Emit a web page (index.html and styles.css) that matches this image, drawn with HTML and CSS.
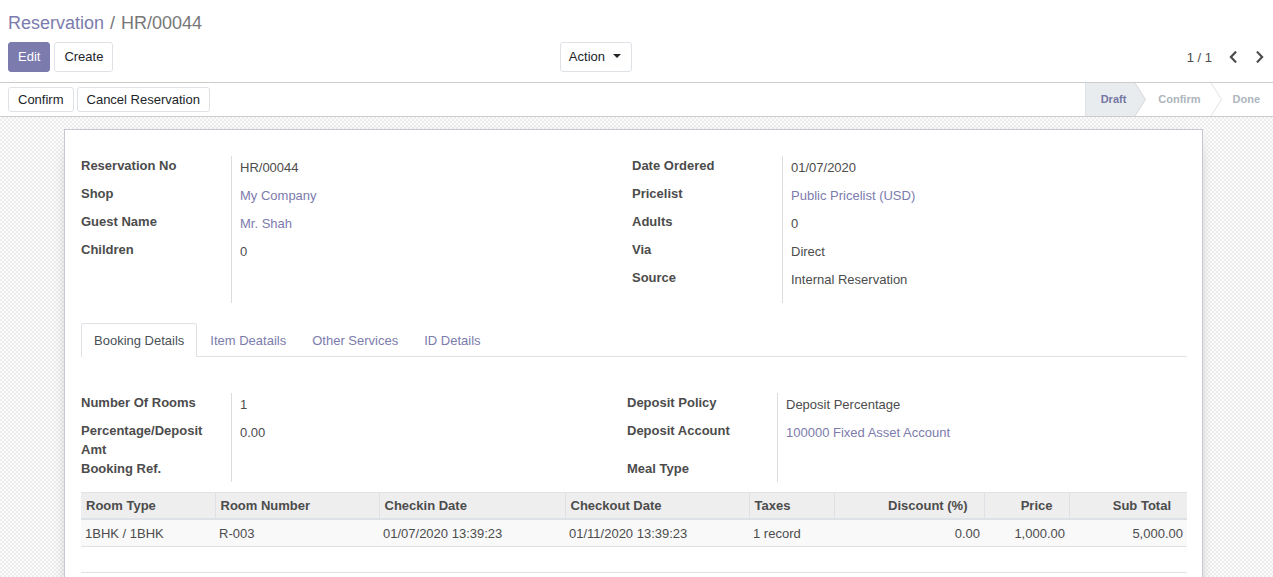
FILE: index.html
```html
<!DOCTYPE html>
<html>
<head>
<meta charset="utf-8">
<title>Reservation / HR/00044</title>
<link rel="stylesheet" href="styles.css">
</head>
<body>
<div class="cp">
  <div class="breadcrumb"><a class="bc-link">Reservation</a><span class="bc-sep">/</span><span class="bc-active">HR/00044</span></div>
  <div class="cp-bottom">
    <div class="cp-left">
      <div class="cp-buttons">
        <button class="btn btn-primary">Edit</button>
        <button class="btn">Create</button>
      </div>
      <div class="cp-sidebar">
        <button class="btn btn-action">Action<span class="caret"></span></button>
      </div>
    </div>
    <div class="cp-right">
      <div class="pager">
        <span class="pager-value">1 / 1</span>
        <button class="pager-btn"><svg width="8" height="12" viewBox="0 0 8 12"><polyline points="6.3,1.4 1.9,6 6.3,10.6" fill="none" stroke="currentColor" stroke-width="2.2" stroke-linecap="square"/></svg></button>
        <button class="pager-btn"><svg width="8" height="12" viewBox="0 0 8 12"><polyline points="1.7,1.4 6.1,6 1.7,10.6" fill="none" stroke="currentColor" stroke-width="2.2" stroke-linecap="square"/></svg></button>
      </div>
    </div>
  </div>
</div>
<div class="statusbar">
  <div class="sb-buttons">
    <button class="btn btn-sm">Confirm</button>
    <button class="btn btn-sm">Cancel Reservation</button>
  </div>
  <div class="sb-status">
    <span class="st st-current">Draft</span><svg class="st-sep" width="11" height="33" viewBox="0 0 11 33" preserveAspectRatio="none"><path d="M0 0 L10.5 16.5 L0 33 Z" fill="#e9ecef"/><polyline points="0,0 10.5,16.5 0,33" fill="none" stroke="#d6d8dc" stroke-width="1"/></svg><span class="st st-mid">Confirm</span><svg class="st-sep" width="11" height="33" viewBox="0 0 11 33" preserveAspectRatio="none"><polyline points="0,0 10.5,16.5 0,33" fill="none" stroke="#dee2e6" stroke-width="1"/></svg><span class="st st-last">Done</span>
  </div>
</div>
<div class="sheet-bg">
  <div class="sheet">
    <div class="outer-group og1">
      <div class="igrp">
        <div class="lbl">Reservation No</div><div class="val">HR/00044</div>
        <div class="lbl">Shop</div><div class="val"><a class="link">My Company</a></div>
        <div class="lbl">Guest Name</div><div class="val"><a class="link">Mr. Shah</a></div>
        <div class="lbl">Children</div><div class="val">0</div>
      </div>
      <div class="igrp">
        <div class="lbl">Date Ordered</div><div class="val">01/07/2020</div>
        <div class="lbl">Pricelist</div><div class="val"><a class="link">Public Pricelist (USD)</a></div>
        <div class="lbl">Adults</div><div class="val">0</div>
        <div class="lbl">Via</div><div class="val">Direct</div>
        <div class="lbl">Source</div><div class="val">Internal Reservation</div>
      </div>
    </div>

    <div class="notebook">
      <ul class="tabs">
        <li class="tab tab-active">Booking Details</li>
        <li class="tab">Item Deatails</li>
        <li class="tab">Other Services</li>
        <li class="tab">ID Details</li>
      </ul>
      <div class="tab-pane">
        <div class="outer-group og2">
          <div class="igrp">
            <div class="lbl">Number Of Rooms</div><div class="val">1</div>
            <div class="lbl">Percentage/Deposit Amt</div><div class="val">0.00</div>
            <div class="lbl">Booking Ref.</div><div class="val val-empty"></div>
          </div>
          <div class="igrp">
            <div class="lbl">Deposit Policy</div><div class="val">Deposit Percentage</div>
            <div class="lbl">Deposit Account</div><div class="val val-tall"><a class="link">100000 Fixed Asset Account</a></div>
            <div class="lbl">Meal Type</div><div class="val val-empty"></div>
          </div>
        </div>

        <table class="list">
          <colgroup>
            <col class="c-type"><col class="c-num"><col class="c-in"><col class="c-out"><col class="c-tax"><col class="c-disc"><col class="c-price"><col class="c-sub">
          </colgroup>
          <thead>
            <tr>
              <th>Room Type</th><th>Room Number</th><th>Checkin Date</th><th>Checkout Date</th><th>Taxes</th><th class="num">Discount (%)</th><th class="num">Price</th><th class="num">Sub Total</th>
            </tr>
          </thead>
          <tbody>
            <tr class="row">
              <td>1BHK / 1BHK</td><td>R-003</td><td>01/07/2020 13:39:23</td><td>01/11/2020 13:39:23</td><td>1 record</td><td class="num">0.00</td><td class="num">1,000.00</td><td class="num">5,000.00</td>
            </tr>
            <tr class="spacer"><td colspan="8"></td></tr>
          </tbody>
        </table>
      </div>
    </div>
  </div>
</div>
</body>
</html>
```
FILE: styles.css
```css
* { box-sizing: border-box; }
html, body { margin: 0; height: 100%; }
body {
  font-family: "Liberation Sans", Arial, sans-serif;
  font-size: 13px;
  line-height: 19px;
  color: #4c4c4c;
  background: #fff;
  overflow: hidden;
}
button { font-family: inherit; font-size: 13px; }
a { cursor: pointer; }

/* control panel */
.cp {
  padding: 8px 4px 10px 8px;
  border-bottom: 1px solid #ccc;
}
.breadcrumb {
  font-size: 18px;
  line-height: 28px;
  height: 28px;
  display: flex;
  gap: 6px;
  padding-top: 1px;
}
.bc-link { color: #7c7bad; }
.bc-active, .bc-sep { color: #777; }
.cp-bottom {
  margin-top: 6px;
  display: flex;
  height: 30px;
}
.cp-left {
  width: 628px;
  display: flex;
  justify-content: space-between;
  padding-right: 4px;
}
.cp-buttons { display: flex; gap: 4px; }
.cp-right { flex: 1; display: flex; justify-content: flex-end; }

.btn {
  height: 30px;
  padding: 0 9px;
  background: #fff;
  border: 1px solid #dee2e6;
  border-radius: 3px;
  color: #212529;
  line-height: 28px;
}
.btn-primary {
  background: #7c7bad;
  border-color: #7c7bad;
  color: #fff;
}
.btn-action { display: flex; align-items: center; padding: 0 10px 0 8px; }
.caret {
  display: inline-block;
  margin-left: 8px;
  border-top: 4px solid #212529;
  border-left: 4px solid transparent;
  border-right: 4px solid transparent;
  margin-top: -2px;
}
.pager { display: flex; align-items: center; }
.pager-value { margin-right: 12px; color: #4c4c4c; }
.pager-btn {
  width: 18px;
  height: 30px;
  padding: 0;
  border: 0;
  background: none;
  color: #4c4c4c;
  display: flex;
  align-items: center;
  justify-content: center;
}
.pager-btn + .pager-btn { margin-left: 9px; }

/* statusbar */
.statusbar {
  display: flex;
  justify-content: space-between;
  align-items: stretch;
  height: 34px;
  padding-left: 8px;
  border-bottom: 1px solid #ccc;
}
.sb-buttons { display: flex; gap: 3px; align-items: center; }
.btn-sm { height: 25px; line-height: 23px; padding: 0 9px; }
.sb-status { display: flex; align-items: stretch; height: 33px; }
.st {
  font-size: 11px;
  font-weight: bold;
  line-height: 33px;
  color: #adb5bd;
}
.st-current {
  background: #e9ecef;
  color: #7476a3;
  border-left: 1px solid #dee2e6;
  padding: 0 9px 0 15px;
}
.st-mid { padding: 0 10px 0 12px; }
.st-last { padding: 0 13px 0 11px; }
.st-sep { display: block; flex: none; }

/* sheet */
.sheet-bg {
  height: calc(100% - 117px);
  padding: 12px 6px 0 0;
  background-color: #f6f6f6;
  background-image: conic-gradient(#eeeeee 25%, #fbfbfb 0 50%, #eeeeee 0 75%, #fbfbfb 0);
  background-size: 4px 4px;
}
.sheet {
  width: 1139px;
  margin: 0 auto;
  min-height: 600px;
  background: #fff;
  border: 1px solid #c8c8d3;
  box-shadow: 0 5px 20px -15px #000;
  padding: 26px 15px 0 16px;
}
.outer-group { display: grid; }
.og1 { grid-template-columns: 551px 1fr; }
.og2 { grid-template-columns: 546px 1fr; margin-top: 35px; }
.igrp {
  display: grid;
  grid-template-columns: 151px 1fr;
  align-content: start;
  background: linear-gradient(#dcdcdc, #dcdcdc) no-repeat 150px 0 / 1px 100%;
}
.og1 .igrp { padding-bottom: 7px; }
.og2 .igrp { padding-bottom: 4px; }
.lbl {
  font-weight: bold;
  line-height: 19px;
  padding-right: 12px;
  color: #4c4c4c;
}
.val {
  min-height: 28px;
  padding: 2px 0 0 8px;
  line-height: 19px;
}
.val-tall { min-height: 38px; }
.val-empty { min-height: 0; }
.link { color: #7c7bad; }

/* notebook */
.notebook { margin-top: 20px; }
.tabs {
  list-style: none;
  margin: 0;
  padding: 0;
  display: flex;
  border-bottom: 1px solid #dee2e6;
  height: 34px;
}
.tab {
  padding: 7px 12px;
  line-height: 19px;
  color: #7c7bad;
  border: 1px solid transparent;
  border-bottom: 0;
  height: 34px;
}
.tab-active {
  color: #495057;
  background: #fff;
  border-color: #dee2e6;
  border-radius: 3px 3px 0 0;
  height: 34px;
  margin-bottom: -1px;
}
.tab-pane { padding-top: 1px; }

/* list */
.list {
  width: 100%;
  margin-top: 10px;
  border-collapse: collapse;
  table-layout: fixed;
}
.c-type { width: 134px; }
.c-num { width: 164px; }
.c-in { width: 186px; }
.c-out { width: 184px; }
.c-tax { width: 85px; }
.c-disc { width: 150px; }
.c-price { width: 85px; }
.c-sub { width: 118px; }
.list th {
  background: #eeeeee;
  font-weight: bold;
  text-align: left;
  padding: 3px 4px 3px 5px;
  line-height: 19px;
  border-top: 1px solid #e2e2e2;
  border-bottom: 2px solid #dee2e6;
  border-left: 1px solid #dee2e6;
  white-space: nowrap;
}
.list th:first-child { border-left: 0; }
.list th.num { padding-right: 16px; }
.list td {
  padding: 4px 4px 3px;
  line-height: 19px;
  white-space: nowrap;
}
.list .num { text-align: right; }
.list .row td { background: #f9f9f9; border-bottom: 1px solid #dee2e6; }
.list .spacer td { height: 26px; border-bottom: 1px solid #dee2e6; padding: 0; }
```
